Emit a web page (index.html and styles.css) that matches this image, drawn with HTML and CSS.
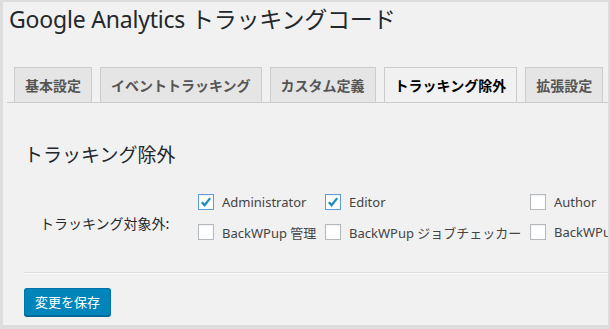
FILE: index.html
```html
<!DOCTYPE html>
<html lang="ja">
<head>
    <meta charset="UTF-8">
    <title>Google Analytics トラッキングコード</title>
    <link rel="stylesheet" href="styles.css">
</head>
<body>

    <div class="frame">
        <div class="wrap">
            <h1 class="title">Google Analytics トラッキングコード</h1>

            <nav class="tabs">
                <a class="tab">基本設定</a>
                <a class="tab">イベントトラッキング</a>
                <a class="tab">カスタム定義</a>
                <a class="tab active">トラッキング除外</a>
                <a class="tab">拡張設定</a>
                <a class="tab tab-edge"></a>
            </nav>

            <div class="panel">
                <h2 class="section-title">トラッキング除外</h2>

                <div class="form-row">
                    <div class="row-label">トラッキング対象外:</div>
                    <div class="roles">
                        <label class="role"><span class="box checked"><svg viewBox="0 0 16 16"><path d="M3.2 8.2 L6.4 11.6 L12.8 3.6" /></svg></span>Administrator</label>
                        <label class="role"><span class="box checked"><svg viewBox="0 0 16 16"><path d="M3.2 8.2 L6.4 11.6 L12.8 3.6" /></svg></span>Editor</label>
                        <label class="role"><span class="box"></span>Author</label>
                        <label class="role"><span class="box"></span>BackWPup 管理</label>
                        <label class="role"><span class="box"></span>BackWPup ジョブチェッカー</label>
                        <label class="role"><span class="box"></span>BackWPu</label>
                    </div>
                </div>

                <hr class="divider">

                <button class="save-btn">変更を保存</button>
            </div>
        </div>
    </div>

</body>
</html>
```

FILE: styles.css
```css
body {
    margin: 0;
    padding: 0;
    font-family: "Noto Sans", "Noto Sans CJK JP", sans-serif;
    color: #23282d;
}

.frame {
    width: 610px;
    height: 329px;
    box-sizing: border-box;
    border-style: solid;
    border-color: #dddddd;
    border-width: 2px 2px 4px 3px;
    background-color: #f1f1f1;
    overflow: hidden;
}

.wrap {
    padding-left: 4px;
}

.title {
    font-size: 23px;
    font-weight: 400;
    line-height: 29px;
    margin: 3px 0 0 0;
    padding-left: 2px;
    letter-spacing: -0.2px;
    color: #23282d;
}

.tabs {
    margin-top: 33px;
    border-bottom: 1px solid #cccccc;
    display: flex;
    white-space: nowrap;
    overflow: hidden;
}

.tab {
    display: block;
    flex: none;
    margin-left: 7px;
    margin-bottom: -1px;
    padding: 5px 10px;
    font-family: "Noto Sans CJK JP", sans-serif;
    font-size: 14px;
    font-weight: 700;
    line-height: 24px;
    color: #555555;
    background-color: #e5e5e5;
    border: 1px solid #cccccc;
    border-bottom: none;
}

.tab + .tab {
    margin-left: 8px;
}

.tab.active {
    color: #000000;
    background-color: #f1f1f1;
    border-bottom: 1px solid #f1f1f1;
    margin-bottom: -1px;
    padding-bottom: 5px;
}

.tab-edge {
    width: 40px;
    height: 24px;
}

.panel {
    padding-left: 17px;
}

.section-title {
    font-family: "Noto Sans CJK JP", sans-serif;
    font-size: 19px;
    font-weight: 400;
    line-height: 25px;
    margin: 38px 0 0 0;
    color: #23282d;
}

.form-row {
    display: flex;
    margin-top: 21px;
}

.row-label {
    width: 158px;
    flex: none;
    padding-left: 16px;
    padding-top: 26px;
    font-family: "Noto Sans CJK JP", sans-serif;
    font-size: 14px;
    color: #23282d;
}

.roles {
    display: grid;
    grid-template-columns: 127px 205px 80px;
    grid-auto-rows: 30px;
}

.role {
    display: flex;
    align-items: center;
    gap: 8px;
    font-size: 13px;
    color: #444444;
    white-space: nowrap;
}

.box {
    flex: none;
    width: 16px;
    height: 16px;
    box-sizing: border-box;
    border: 1px solid #b4b9be;
    background-color: #ffffff;
    box-shadow: inset 0 1px 2px rgba(0, 0, 0, 0.07);
}

.box svg {
    display: block;
    width: 14px;
    height: 14px;
}

.box path {
    fill: none;
    stroke: #1e8cbe;
    stroke-width: 2.6;
}

.box.checked {
    border-color: #5b9dd9;
}

.divider {
    margin: 25px 0 0 0;
    border: none;
    border-top: 1px solid #dddddd;
    border-bottom: 1px solid #fafafa;
}

.save-btn {
    margin-top: 14px;
    height: 28px;
    padding: 0 10px;
    font-family: "Noto Sans CJK JP", sans-serif;
    font-size: 13px;
    line-height: 26px;
    color: #ffffff;
    background-color: #0085ba;
    border: 1px solid #0073aa;
    border-bottom-color: #006799;
    border-radius: 3px;
    box-shadow: 0 1px 0 #006799;
    cursor: pointer;
}
```
